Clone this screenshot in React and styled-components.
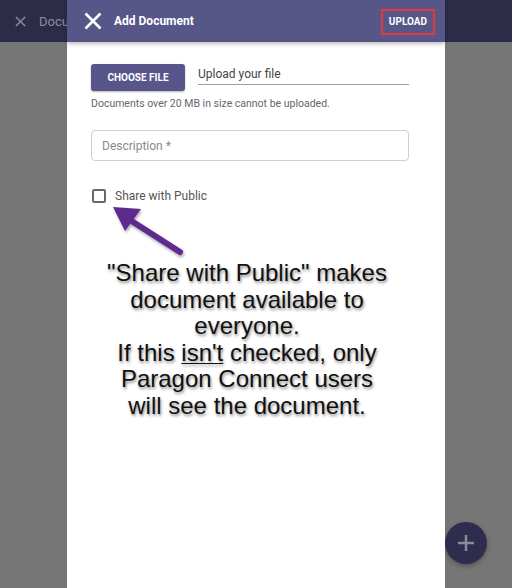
import React from 'react';
import styled, { createGlobalStyle } from 'styled-components';

const Global = createGlobalStyle`
  html, body { margin: 0; padding: 0; }
  body { font-family: Roboto, "Noto Sans", sans-serif; background: #767676; }
`;

const Page = styled.div`
  position: relative;
  width: 512px;
  height: 588px;
  overflow: hidden;
  background: #767676;
`;

const BackBar = styled.div`
  height: 42px;
  background: #2d2c48;
  display: flex;
  align-items: center;
  padding-left: 15px;
  gap: 13px;
  color: #8c8ba3;
  font-size: 13px;
`;

const Dialog = styled.div`
  position: absolute;
  top: 0;
  left: 67px;
  width: 378px;
  height: 588px;
  background: #fff;
  display: flex;
  flex-direction: column;
`;

const Header = styled.div`
  height: 42px;
  background: #575689;
  display: flex;
  align-items: center;
  padding: 0 10px 0 17px;
  box-shadow: 0 2px 4px rgba(0,0,0,0.25);
  position: relative;
  z-index: 1;
`;

const Title = styled.div`
  color: #fff;
  font-weight: 700;
  font-size: 12px;
  margin-left: 12px;
  flex: 1;
`;

const UploadBtn = styled.div`
  border: 2px solid #e53935;
  color: #fff;
  font-weight: 700;
  font-size: 10px;
  padding: 0 6px;
  height: 22px;
  display: flex;
  align-items: center;
  margin-top: 1px;
`;

const Body = styled.div`
  padding: 22px 36px 0 24px;
  display: flex;
  flex-direction: column;
`;

const FileRow = styled.div`
  display: flex;
  align-items: flex-start;
  gap: 13px;
`;

const ChooseBtn = styled.div`
  width: 94px;
  height: 27px;
  background: #57558a;
  border-radius: 3px;
  color: #fff;
  font-weight: 700;
  font-size: 10px;
  display: flex;
  align-items: center;
  justify-content: center;
  box-shadow: 0 1px 2px rgba(0,0,0,0.3);
`;

const FileInput = styled.div`
  flex: 1;
  height: 20px;
  border-bottom: 1px solid #9e9e9e;
  color: #444;
  font-size: 12px;
  display: flex;
  align-items: center;
`;

const Helper = styled.div`
  color: #666;
  font-size: 10.5px;
  margin-top: 6px;
`;

const TextField = styled.div`
  margin-top: 20px;
  height: 29px;
  border: 1px solid #cfcfcf;
  border-radius: 4px;
  display: flex;
  align-items: center;
  padding-left: 10px;
  color: #8a8a8a;
  font-size: 12px;
`;

const CheckRow = styled.div`
  margin-top: 28px;
  display: flex;
  align-items: center;
  gap: 9px;
  color: #555;
  font-size: 12px;
`;

const Box = styled.div`
  width: 10px;
  height: 10px;
  border: 2px solid #6a6a6a;
  border-radius: 2px;
  margin-left: 1px;
`;

const Arrow = styled.svg`
  position: absolute;
  left: 100px;
  top: 200px;
  overflow: visible;
`;

const Note = styled.div`
  position: absolute;
  top: 260px;
  left: 67px;
  width: 360px;
  text-align: center;
  font-family: "Liberation Sans", Arial, sans-serif;
  font-size: 24px;
  line-height: 26.6px;
  color: #111;
  text-shadow: 1px 2px 3px rgba(0,0,0,0.45);
  u { text-decoration-thickness: 1px; text-underline-offset: 2px; }
`;

const Fab = styled.div`
  position: absolute;
  left: 445px;
  top: 522px;
  width: 42px;
  height: 42px;
  border-radius: 50%;
  background: #2e2d4d;
  display: flex;
  align-items: center;
  justify-content: center;
  box-shadow: 0 2px 5px rgba(0,0,0,0.3);
`;

export default function App() {
  return (
    <Page>
      <Global />
      <BackBar>
        <svg width="11" height="11" viewBox="0 0 12 12">
          <path d="M1 1L11 11M11 1L1 11" stroke="#8c8ba3" strokeWidth="1.6" />
        </svg>
        <span>Document</span>
      </BackBar>
      <Fab>
        <svg width="18" height="18" viewBox="0 0 18 18">
          <path d="M9 1V17M1 9H17" stroke="#8b8a9c" strokeWidth="2.5" />
        </svg>
      </Fab>
      <Dialog>
        <Header>
          <svg width="18" height="18" viewBox="0 0 18 18">
            <path d="M1.5 1.5L16.5 16.5M16.5 1.5L1.5 16.5" stroke="#fff" strokeWidth="2.6" />
          </svg>
          <Title>Add Document</Title>
          <UploadBtn>UPLOAD</UploadBtn>
        </Header>
        <Body>
          <FileRow>
            <ChooseBtn>CHOOSE FILE</ChooseBtn>
            <FileInput>Upload your file</FileInput>
          </FileRow>
          <Helper>Documents over 20 MB in size cannot be uploaded.</Helper>
          <TextField>Description *</TextField>
          <CheckRow>
            <Box />
            <span>Share with Public</span>
          </CheckRow>
        </Body>
      </Dialog>
      <Arrow width="90" height="60">
        <defs>
          <filter id="sh" x="-30%" y="-30%" width="160%" height="160%">
            <feDropShadow dx="1" dy="2" stdDeviation="1.5" floodColor="#000" floodOpacity="0.35" />
          </filter>
        </defs>
        <g filter="url(#sh)">
          <path d="M80 52L30 20" stroke="#5f2a8e" strokeWidth="6" strokeLinecap="round" />
          <path d="M13 7L41 9L25 31Z" fill="#5f2a8e" />
        </g>
      </Arrow>
      <Note>
        "Share with Public" makes<br />
        document available to<br />
        everyone.<br />
        If this <u>isn't</u> checked, only<br />
        Paragon Connect users<br />
        will see the document.
      </Note>
    </Page>
  );
}
